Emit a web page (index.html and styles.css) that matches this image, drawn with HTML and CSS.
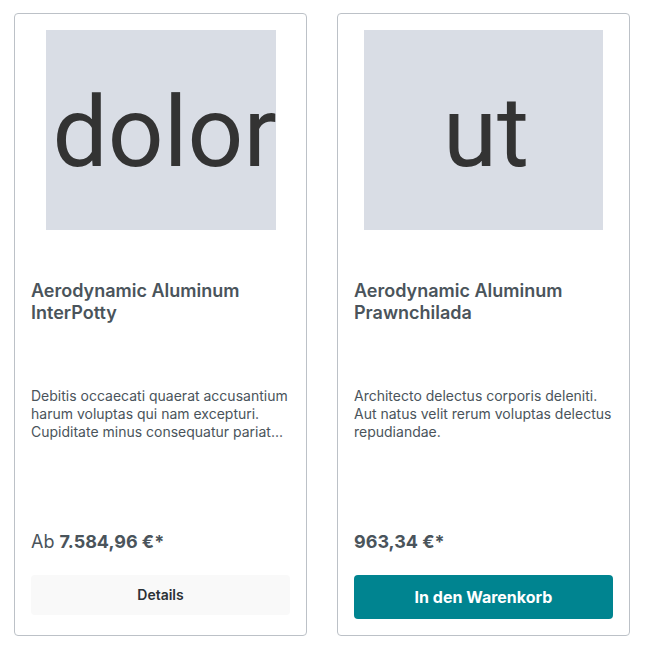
FILE: index.html
```html
<!DOCTYPE html>
<html>
<head>
    <meta charset="utf-8">
    <title>Produkte</title>
    <link rel="stylesheet" href="styles.css">
</head>
<body>
    <div class="product-listing">
        <div class="product-box">
            <div class="product-image-wrapper">
                <div class="product-image product-image-wide">
                    <span class="placeholder-text">dolor</span>
                </div>
            </div>
            <div class="product-info">
                <div class="product-name">Aerodynamic Aluminum InterPotty</div>
                <div class="product-description">Debitis occaecati quaerat accusantium harum voluptas qui nam excepturi. Cupiditate minus consequatur pariat...</div>
                <div class="product-price">Ab <strong>7.584,96 €*</strong></div>
                <div class="product-action">
                    <a class="btn btn-light">Details</a>
                </div>
            </div>
        </div>

        <div class="product-box">
            <div class="product-image-wrapper">
                <div class="product-image product-image-square">
                    <span class="placeholder-text">ut</span>
                </div>
            </div>
            <div class="product-info">
                <div class="product-name">Aerodynamic Aluminum Prawnchilada</div>
                <div class="product-description">Architecto delectus corporis deleniti. Aut natus velit rerum voluptas delectus repudiandae.</div>
                <div class="product-price"><strong>963,34 €*</strong></div>
                <div class="product-action">
                    <button class="btn btn-buy">In den Warenkorb</button>
                </div>
            </div>
        </div>
    </div>
</body>
</html>
```

FILE: styles.css
```css
* {
    margin: 0;
    padding: 0;
    box-sizing: border-box;
}

body {
    background-color: #ffffff;
    font-family: Inter, 'Noto Sans', sans-serif;
    color: #4a545b;
    padding: 13px 14px;
}

.product-listing {
    display: grid;
    grid-template-columns: 293px 293px;
    column-gap: 30px;
    align-items: stretch;
}

.product-box {
    border: 1px solid #bcc1c7;
    border-radius: 4px;
    padding: 16px;
    display: flex;
    flex-direction: column;
}

.product-image-wrapper {
    height: 200px;
    display: flex;
    justify-content: center;
    margin-bottom: 50px;
}

.product-image {
    height: 200px;
    background-color: #d9dde5;
    display: flex;
    align-items: center;
    overflow: hidden;
}

.product-image-wide {
    width: 230px;
    justify-content: flex-start;
    padding-left: 7px;
}

.product-image-square {
    width: 239px;
    justify-content: center;
    padding-left: 5px;
}

.placeholder-text {
    font-family: Roboto, 'Liberation Sans', sans-serif;
    font-size: 98px;
    color: #333333;
    white-space: nowrap;
    line-height: 1;
    margin-top: 6px;
}

.product-name {
    font-size: 18px;
    font-weight: 600;
    line-height: 22px;
    height: 44px;
    overflow: hidden;
    color: #4a545b;
}

.product-description {
    margin-top: 63px;
    font-size: 14px;
    line-height: 18px;
    height: 54px;
    overflow: hidden;
    color: #4a545b;
}

.product-price {
    margin-top: 87px;
    font-size: 18px;
    line-height: 27px;
    color: #4a545b;
}

.product-price strong {
    font-weight: 700;
}

.product-action {
    margin-top: 20px;
}

.btn {
    display: block;
    width: 100%;
    border: none;
    border-radius: 4px;
    text-align: center;
    font-family: Inter, 'Noto Sans', sans-serif;
    cursor: pointer;
}

.btn-light {
    height: 40px;
    line-height: 40px;
    background-color: #f9f9f9;
    color: #2b3136;
    font-size: 14px;
    font-weight: 600;
}

.btn-buy {
    height: 44px;
    background-color: #008490;
    color: #ffffff;
    font-size: 16px;
    font-weight: 700;
}
```
